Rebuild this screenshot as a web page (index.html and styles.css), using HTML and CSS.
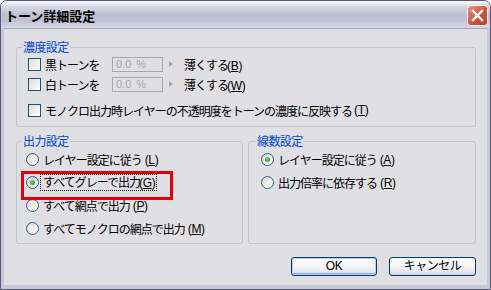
FILE: index.html
```html
<!DOCTYPE html>
<html lang="ja">
<head>
    <meta charset="UTF-8">
    <title>トーン詳細設定</title>
    <link rel="stylesheet" href="styles.css">
</head>
<body>

<div class="window">
    <div class="titlebar">
        <span class="title">トーン詳細設定</span>
        <span class="close">
            <svg width="21" height="21" viewBox="0 0 21 21">
                <defs>
                    <linearGradient id="red" x1="0" y1="0" x2="1" y2="1">
                        <stop offset="0" stop-color="#ec9b8c"/>
                        <stop offset="0.5" stop-color="#d4563f"/>
                        <stop offset="1" stop-color="#b83a26"/>
                    </linearGradient>
                </defs>
                <rect x="0.5" y="0.5" width="20" height="20" rx="3" fill="url(#red)" stroke="#ffffff"/>
                <path d="M6 6 L15 15 M15 6 L6 15" stroke="#ffffff" stroke-width="2.4" stroke-linecap="square"/>
            </svg>
        </span>
    </div>

    <div class="client">
        <fieldset class="group density">
            <legend>濃度設定</legend>
            <div class="tone-row">
                <span class="check"><span class="box"></span>黒トーンを</span>
                <span class="field">0.0 %</span>
                <span class="arrow"></span>
                <span>薄くする<span class="key">(<u>B</u>)</span></span>
            </div>
            <div class="tone-row">
                <span class="check"><span class="box"></span>白トーンを</span>
                <span class="field">0.0 %</span>
                <span class="arrow"></span>
                <span>薄くする<span class="key">(<u>W</u>)</span></span>
            </div>
            <div class="tone-row mono">
                <span class="check"><span class="box"></span>モノクロ出力時レイヤーの不透明度をトーンの濃度に反映する<span class="key">(<u>T</u>)</span></span>
            </div>
        </fieldset>

        <div class="groups">
            <fieldset class="group output">
                <legend>出力設定</legend>
                <div class="radio-row"><span class="radio"></span>レイヤー設定に従う<span class="key">(<u>L</u>)</span></div>
                <div class="radio-row marked"><span class="radio on"></span><span class="focus">すべてグレーで出力<span class="key">(<u>G</u>)</span></span></div>
                <div class="radio-row"><span class="radio"></span>すべて網点で出力<span class="key">(<u>P</u>)</span></div>
                <div class="radio-row"><span class="radio"></span>すべてモノクロの網点で出力<span class="key">(<u>M</u>)</span></div>
            </fieldset>
            <fieldset class="group lines">
                <legend>線数設定</legend>
                <div class="radio-row"><span class="radio on"></span>レイヤー設定に従う<span class="key">(<u>A</u>)</span></div>
                <div class="radio-row"><span class="radio"></span>出力倍率に依存する<span class="key">(<u>R</u>)</span></div>
            </fieldset>
        </div>

        <div class="buttons">
            <button class="btn default">OK</button>
            <button class="btn">キャンセル</button>
        </div>
    </div>
</div>

</body>
</html>
```

FILE: styles.css
```css
* {
    margin: 0;
    padding: 0;
    box-sizing: border-box;
}

body {
    background: #ffffff;
    font-family: "Noto Sans CJK JP", sans-serif;
    font-size: 12px;
    letter-spacing: -1px;
    text-autospace: no-autospace;
    color: #000000;
}

.key {
    font-family: "Liberation Sans", sans-serif;
    letter-spacing: -0.3px;
    margin-left: -1px;
}

.key u {
    text-underline-offset: 1px;
}

.window {
    width: 491px;
    height: 290px;
    border: 1px solid #585878;
    border-radius: 7px 7px 0 0;
    background: #c8c8d8;
    overflow: hidden;
}

.titlebar {
    height: 27px;
    display: flex;
    align-items: center;
    justify-content: space-between;
    padding: 0 2px 0 4px;
    background: linear-gradient(#fbfbfd 0%, #dcdce7 18%, #bfbfd1 50%, #c2c2d4 75%, #d9d9e5 100%);
}

.title {
    font-weight: bold;
    font-size: 13px;
    letter-spacing: 0;
    padding-top: 1px;
}

.close {
    display: flex;
    margin-top: 1px;
}

.client {
    margin: 0 3px 4px 3px;
    height: 257px;
    background: #e0dfe3;
    border-top: 1px solid #a8a8bc;
    padding: 11px 11px 0 12px;
}

.group {
    border: 1px solid #c3c3cb;
    border-radius: 3px;
}

.group legend {
    color: #0046d5;
    line-height: 14px;
    padding: 0 1px;
    letter-spacing: -0.6px;
}

.density {
    padding: 2px 0 8px 11px;
}

.density legend {
    margin-left: -6px;
}

.tone-row {
    display: flex;
    align-items: center;
    height: 16px;
}

.tone-row + .tone-row {
    margin-top: 4px;
}

.tone-row.mono {
    margin-top: 10px;
}

.check {
    display: flex;
    align-items: center;
    gap: 3px;
    width: 84px;
    white-space: nowrap;
}

.mono .check {
    width: auto;
}

.box {
    width: 13px;
    height: 13px;
    border: 1px solid #1c5180;
    background: linear-gradient(135deg, #dcdcd7 0%, #f4f4f2 70%, #ffffff 100%);
    flex: none;
    margin-right: 1px;
}

.field {
    width: 51px;
    height: 15px;
    border: 1px solid #a8a8ac;
    color: #a6a6a6;
    padding-left: 3px;
    line-height: 13px;
    font-family: "Liberation Sans", sans-serif;
    font-size: 11px;
    letter-spacing: 0;
    word-spacing: 2px;
}

.arrow {
    width: 0;
    height: 0;
    border-top: 3.5px solid transparent;
    border-bottom: 3.5px solid transparent;
    border-left: 4px solid #a5a5ad;
    margin: 0 11px 0 6px;
}

.groups {
    display: grid;
    grid-template-columns: 227px 228px;
    gap: 5px;
    margin-top: 7px;
}

.output {
    padding: 0 0 3px 9px;
}

.output legend {
    margin-left: -4px;
}

.lines {
    padding: 0 0 3px 12px;
}

.lines legend {
    margin-left: -5px;
}

.radio-row {
    display: flex;
    align-items: center;
    gap: 4px;
    height: 23px;
    white-space: nowrap;
}

.radio-row.marked {
    position: relative;
}

.radio-row.marked::after {
    content: "";
    position: absolute;
    left: -5px;
    top: 0;
    width: 146px;
    height: 23px;
    border: 3px solid #e5000f;
}

.radio {
    width: 13px;
    height: 13px;
    border-radius: 50%;
    border: 1px solid #2c5d8a;
    background: linear-gradient(135deg, #d8d8d4 0%, #f2f2f0 60%, #ffffff 100%);
    flex: none;
    display: flex;
    align-items: center;
    justify-content: center;
}

.radio.on::before {
    content: "";
    width: 5px;
    height: 5px;
    border-radius: 50%;
    background: radial-gradient(circle at 40% 40%, #6fd36f 0%, #21a121 80%);
}

.focus {
    outline: 1px dotted #000000;
    outline-offset: 0;
    margin-left: -2px;
    padding: 0 1px 0 2px;
    line-height: 13px;
}

.buttons {
    display: flex;
    justify-content: flex-end;
    gap: 12px;
    margin-top: 13px;
}

.btn {
    width: 86px;
    height: 19px;
    border: 1px solid #003c74;
    border-radius: 3px;
    background: linear-gradient(#ffffff 0%, #f6f6f8 50%, #e4e4ec 85%, #cfd0dc 100%);
    font-family: "Liberation Sans", "Noto Sans CJK JP", sans-serif;
    font-size: 12px;
    letter-spacing: -0.5px;
    color: #000000;
    line-height: 15px;
}

.btn:last-child {
    width: 87px;
}

.btn.default {
    box-shadow: inset 0 0 0 1px #b8d0f6, inset 0 -1px 0 1px #8eaaec;
}
```
